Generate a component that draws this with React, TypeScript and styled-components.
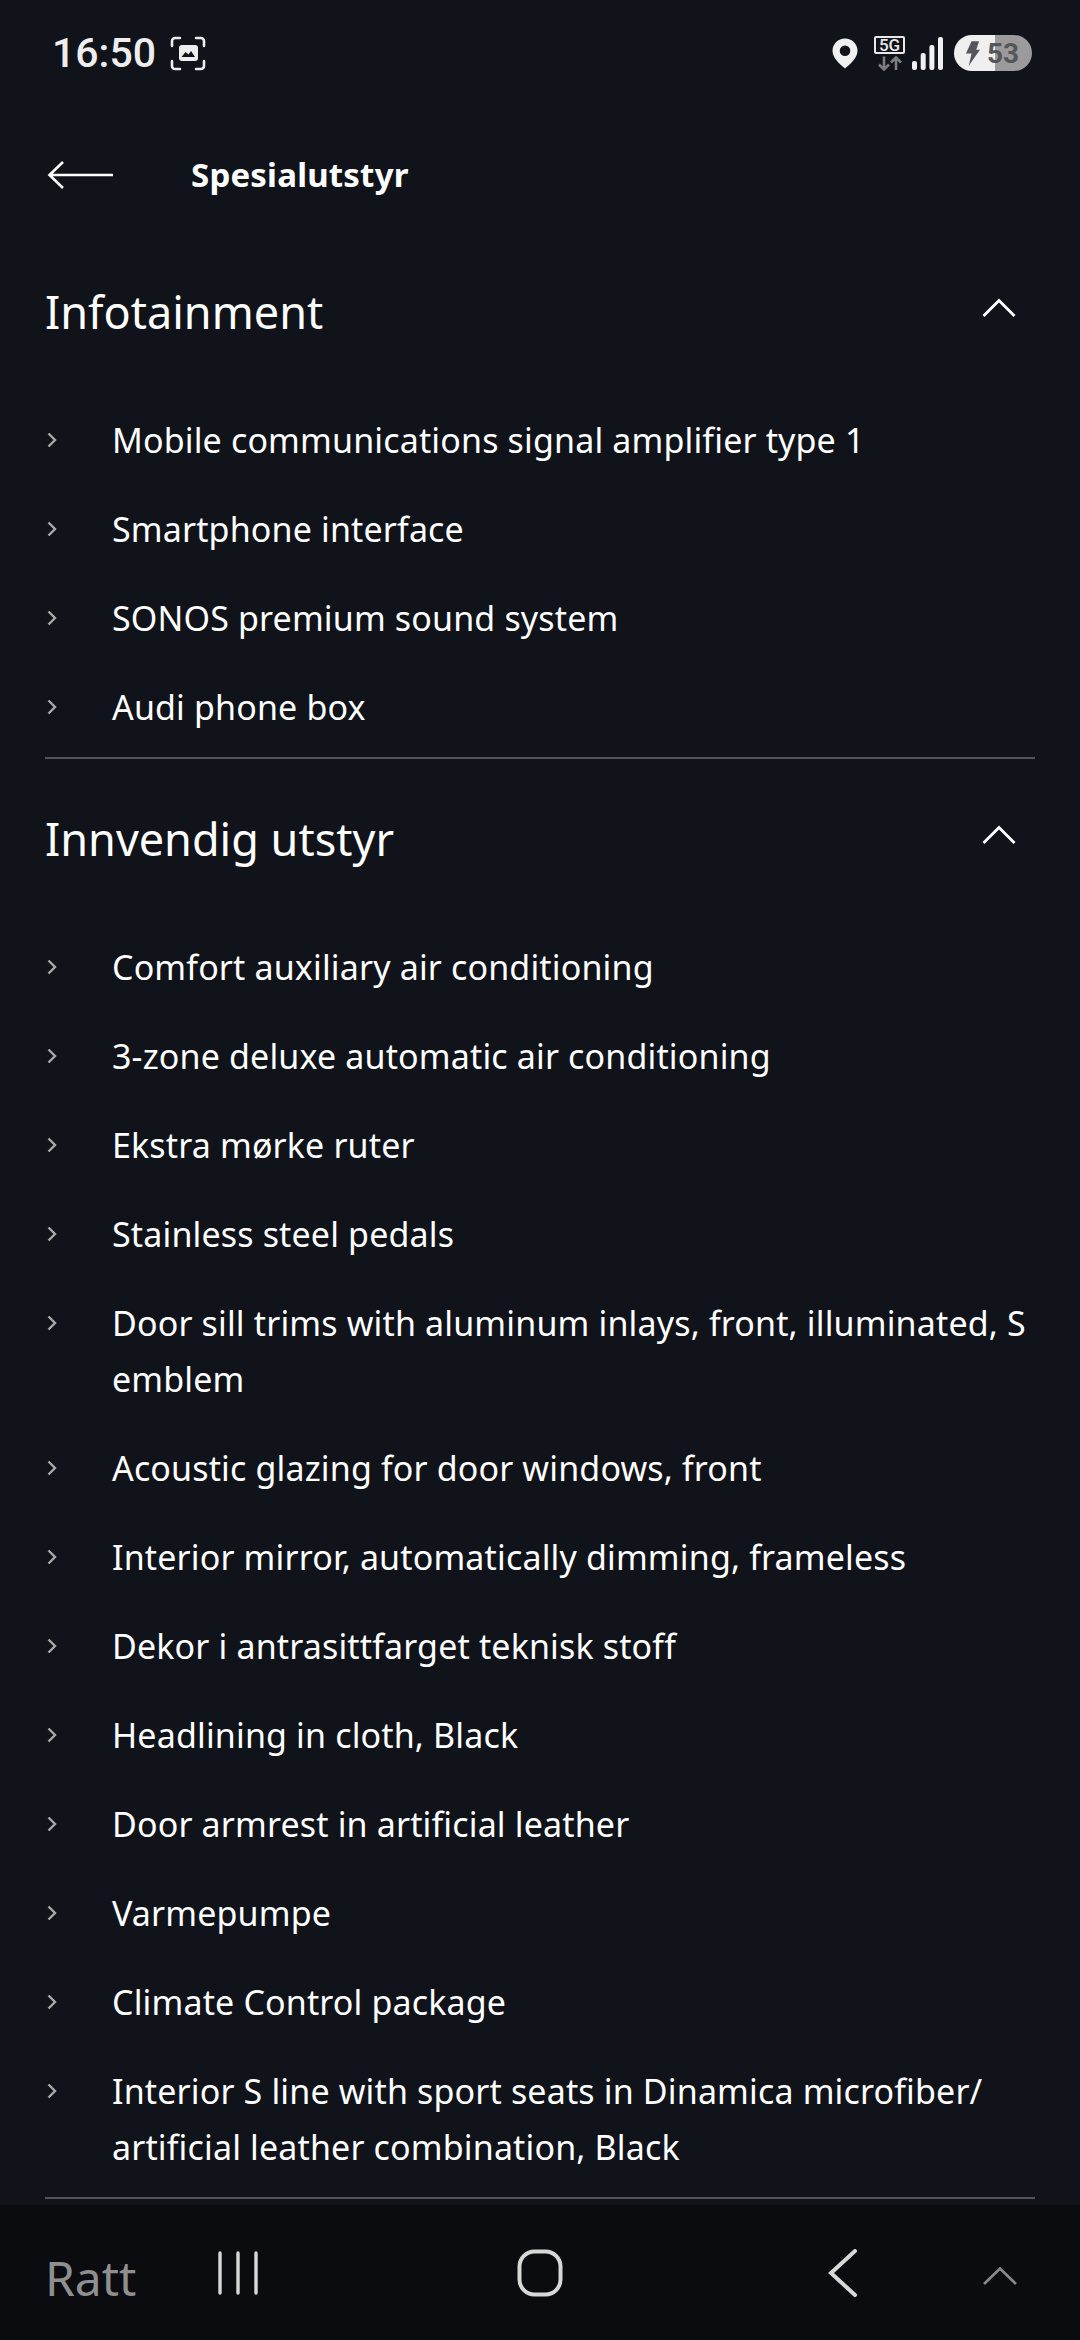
import styled, { createGlobalStyle } from 'styled-components';

const GlobalStyle = createGlobalStyle`
    html, body {
        margin: 0;
        padding: 0;
        background: #10131a;
    }
`;

const sections = [
    {
        title: 'Infotainment',
        items: [
            'Mobile communications signal amplifier type 1',
            'Smartphone interface',
            'SONOS premium sound system',
            'Audi phone box',
        ],
    },
    {
        title: 'Innvendig utstyr',
        items: [
            'Comfort auxiliary air conditioning',
            '3-zone deluxe automatic air conditioning',
            'Ekstra mørke ruter',
            'Stainless steel pedals',
            'Door sill trims with aluminum inlays, front, illuminated, S emblem',
            'Acoustic glazing for door windows, front',
            'Interior mirror, automatically dimming, frameless',
            'Dekor i antrasittfarget teknisk stoff',
            'Headlining in cloth, Black',
            'Door armrest in artificial leather',
            'Varmepumpe',
            'Climate Control package',
            'Interior S line with sport seats in Dinamica microfiber/ artificial leather combination, Black',
        ],
    },
];

export default function App() {
    return (
        <>
            <GlobalStyle />
            <Screen>
                <StatusBar>
                    <StatusLeft>
                        <Clock>16:50</Clock>
                        <svg width="36" height="35" viewBox="0 0 36 35" fill="none">
                            <path
                                d="M2 10V5a3 3 0 0 1 3-3h5M26 2h5a3 3 0 0 1 3 3v5M34 25v5a3 3 0 0 1-3 3h-5M10 33H5a3 3 0 0 1-3-3v-5"
                                stroke="#eeeeee"
                                strokeWidth="2.6"
                                strokeLinecap="round"
                            />
                            <path
                                d="M9 12a3 3 0 0 1 3-3h13a3 3 0 0 1 3 3v10a3 3 0 0 1-3 3H12a3 3 0 0 1-3-3z"
                                fill="#eeeeee"
                            />
                            <path d="M11.5 21l4-5 3 2.5 2.5-3.5 4 6z" fill="#10131a" />
                        </svg>
                    </StatusLeft>
                    <StatusRight>
                        <svg width="26" height="31" viewBox="0 0 26 31">
                            <path
                                fillRule="evenodd"
                                d="M13 0.5C6 0.5 0.5 6 0.5 12.8 0.5 20 8 26.5 13 30.5 18 26.5 25.5 20 25.5 12.8 25.5 6 20 0.5 13 0.5zM13 7.5a5.3 5.3 0 1 1 0 10.6 5.3 5.3 0 0 1 0-10.6z"
                                fill="#f0f0f0"
                            />
                        </svg>
                        <NetworkBadge>
                            <NetworkLabel>5G</NetworkLabel>
                            <svg width="26" height="15" viewBox="0 0 26 15" fill="none">
                                <path
                                    d="M7 0.5V13M2 8.5l5 5 5-5M19 14V1.5M14 6.5l5-5 5 5"
                                    stroke="#7d7d7d"
                                    strokeWidth="2.6"
                                />
                            </svg>
                        </NetworkBadge>
                        <svg width="31" height="34" viewBox="0 0 31 34" fill="#f0f0f0">
                            <rect x="0" y="25" width="5" height="9" rx="2" />
                            <rect x="8.7" y="17" width="5" height="17" rx="2" />
                            <rect x="17.4" y="9" width="5" height="25" rx="2" />
                            <rect x="26" y="1" width="5" height="33" rx="2" />
                        </svg>
                        <Battery>
                            <svg width="15" height="25" viewBox="0 0 16 26" fill="#55565a">
                                <path d="M7 0h8l-3 9h4L4 26l3-13H1z" />
                            </svg>
                            <BatteryLevel>53</BatteryLevel>
                        </Battery>
                    </StatusRight>
                </StatusBar>

                <TopBar>
                    <svg width="66" height="30" viewBox="0 0 66 30" fill="none">
                        <path d="M66 15H3M16 2L2.5 15 16 28" stroke="#ffffff" strokeWidth="2.6" />
                    </svg>
                    <PageTitle>Spesialutstyr</PageTitle>
                </TopBar>

                <Content>
                    {sections.map((section) => (
                        <Section key={section.title}>
                            <SectionHeader>
                                <SectionTitle>{section.title}</SectionTitle>
                                <CollapseIcon width="34" height="20" viewBox="0 0 34 20" fill="none">
                                    <path d="M1.5 18L17 2.5 32.5 18" stroke="#ffffff" strokeWidth="2.8" />
                                </CollapseIcon>
                            </SectionHeader>
                            <ItemList>
                                {section.items.map((item) => (
                                    <Item key={item}>
                                        <ItemMarker>
                                            <svg width="10" height="16" viewBox="0 0 10 16" fill="none">
                                                <path d="M1.5 1.5L8 8l-6.5 6.5" stroke="#a9a9a9" strokeWidth="2.4" />
                                            </svg>
                                        </ItemMarker>
                                        <ItemText>{item}</ItemText>
                                    </Item>
                                ))}
                            </ItemList>
                        </Section>
                    ))}
                </Content>

                <NavBar>
                    <NextSection>Ratt</NextSection>
                    <svg width="40" height="44" viewBox="0 0 40 44" stroke="#d8d8d8" strokeWidth="3.4" strokeLinecap="round">
                        <path d="M2 2v40M20 2v40M38 2v40" />
                    </svg>
                    <svg width="46" height="48" viewBox="0 0 46 48" fill="none">
                        <rect x="2.5" y="2.5" width="41" height="43" rx="15" stroke="#d8d8d8" strokeWidth="4" />
                    </svg>
                    <svg width="30" height="48" viewBox="0 0 30 48" fill="none">
                        <path d="M27 2L3 24l0 0 24 22" stroke="#d8d8d8" strokeWidth="4" strokeLinecap="round" />
                    </svg>
                    <ExpandIcon width="34" height="18" viewBox="0 0 34 18" fill="none">
                        <path d="M1 17L17 1.5 33 17" stroke="#8a8a8a" strokeWidth="2.6" />
                    </ExpandIcon>
                </NavBar>
            </Screen>
        </>
    );
}

const Screen = styled.div`
    width: 1080px;
    height: 2340px;
    display: flex;
    flex-direction: column;
    overflow: hidden;
    background: #10131a;
    color: #ffffff;
    font-family: 'Noto Sans', 'Open Sans', sans-serif;
`;

const StatusBar = styled.div`
    height: 106px;
    flex: none;
    display: flex;
    align-items: center;
    justify-content: space-between;
    padding: 0 48px 0 52px;
`;

const StatusLeft = styled.div`
    display: flex;
    align-items: center;
    gap: 14px;
`;

const Clock = styled.span`
    font-family: Roboto, sans-serif;
    font-size: 41px;
    font-weight: 500;
    color: #eeeeee;
`;

const StatusRight = styled.div`
    display: flex;
    align-items: center;
`;

const NetworkBadge = styled.div`
    display: flex;
    flex-direction: column;
    align-items: center;
    gap: 2px;
    margin: 0 7px 0 16px;
`;

const NetworkLabel = styled.span`
    width: 31px;
    height: 18px;
    box-sizing: border-box;
    border: 2px solid #e8e8e8;
    border-radius: 2px;
    font-family: Roboto, sans-serif;
    font-size: 17px;
    font-weight: 500;
    line-height: 14px;
    text-align: center;
    color: #e8e8e8;
`;

const Battery = styled.div`
    width: 78px;
    height: 36px;
    margin-left: 11px;
    box-sizing: border-box;
    padding-left: 11px;
    display: flex;
    align-items: center;
    gap: 7px;
    border-radius: 18px;
    background: linear-gradient(90deg, #efefef 0 41px, #9b9b9b 41px);
`;

const BatteryLevel = styled.span`
    font-family: Roboto, sans-serif;
    font-size: 28px;
    font-weight: 700;
    color: #55565a;
`;

const TopBar = styled.div`
    height: 126px;
    flex: none;
    box-sizing: border-box;
    display: flex;
    align-items: center;
    gap: 78px;
    padding: 12px 45px 0 47px;
`;

const PageTitle = styled.h1`
    margin: 0;
    font-size: 33px;
    font-weight: 700;
    letter-spacing: 0.2px;
    line-height: 44px;
`;

const Content = styled.div`
    flex: 1;
    min-height: 0;
    padding: 0 45px;
`;

const Section = styled.section`
    border-bottom: 2px solid #54565b;
`;

const SectionHeader = styled.div`
    height: 160px;
    display: flex;
    align-items: center;
    justify-content: space-between;
    padding-right: 19px;
`;

const CollapseIcon = styled.svg`
    margin-bottom: 8px;
`;

const SectionTitle = styled.h2`
    margin: 0;
    font-size: 45px;
    font-weight: 400;
    line-height: 60px;
`;

const ItemList = styled.ul`
    list-style: none;
    margin: 0;
    padding: 4px 0 5px;
`;

const Item = styled.li`
    display: flex;
    padding: 16px 0 17px;
`;

const ItemMarker = styled.span`
    width: 67px;
    flex: none;
    height: 56px;
    display: flex;
    align-items: center;
    padding-left: 2px;
    box-sizing: border-box;
`;

const ItemText = styled.span`
    font-size: 34px;
    letter-spacing: 0.15px;
    line-height: 56px;
`;

const NavBar = styled.nav`
    height: 135px;
    flex: none;
    display: grid;
    grid-template-columns: 173px 299px 311px 155px auto;
    align-items: center;
    padding: 0 0 0 45px;
    background: #0a0c10;
`;

const NextSection = styled.span`
    margin-top: 10px;
    font-size: 48px;
    color: #8f8f8f;
    line-height: 60px;
`;

const ExpandIcon = styled.svg`
    margin-top: 7px;
`;
